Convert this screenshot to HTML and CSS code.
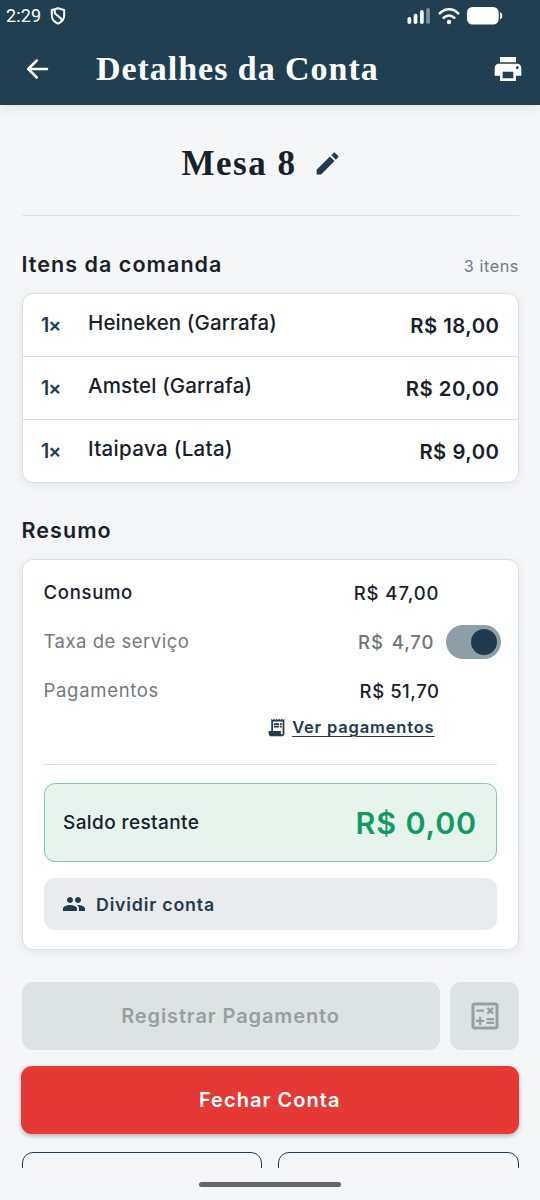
FILE: index.html
```html
<!DOCTYPE html>
<html lang="pt-BR">
<head>
<meta charset="utf-8">
<meta name="viewport" content="width=device-width, initial-scale=1">
<title>Detalhes da Conta</title>
<link rel="stylesheet" href="styles.css">
</head>
<body>
<div class="screen">
  <header class="top">
    <div class="status">
      <span class="clock">2:29</span>
      <svg class="shield" viewBox="0 0 16 18"><path d="M8 1.300 14.200 3v5.600c0 3.700-2.500 6.500-6.200 8.100C4.300 15.100 1.800 12.300 1.800 8.600V3z"/><path d="M4.500 2.300 5 6.600l6.300 5.200.4 2.400"/></svg>
      <div class="status-right">
        <svg class="signal" viewBox="0 0 24 18"><rect x="0.500" y="10" width="3.700" height="7" rx="1.800"/><rect x="6.700" y="6.700" width="3.700" height="10.300" rx="1.800"/><rect x="13" y="3" width="3.700" height="14" rx="1.800"/><rect class="dim" x="19.200" y="1" width="3.700" height="16" rx="1.800"/></svg>
        <svg class="wifi" viewBox="0 0 22 18"><path d="M1.800 6.300C7.200.9 14.800.9 20.200 6.300M5.700 10.700c3.200-2.900 7.400-2.900 10.600 0"/><circle cx="11" cy="15" r="2.200"/></svg>
        <svg class="battery" viewBox="0 0 36 18"><rect x="0" y="0" width="31.700" height="17.500" rx="5.500"/><path d="M33 5.300c1.600.4 2.300 1.500 2.300 3.500s-.7 3.100-2.300 3.500z"/></svg>
      </div>
    </div>
    <div class="bar">
      <svg class="back" viewBox="0 0 24 24"><path d="M11.800 3.500 3.200 12l8.600 8.500M3.500 12H22"/></svg>
      <h1 class="title">Detalhes da Conta</h1>
      <svg class="print" viewBox="0 0 24 24"><path d="M19 8H5c-1.660 0-3 1.340-3 3v6h4v4h12v-4h4v-6c0-1.660-1.340-3-3-3zm-3 11H8v-5h8v5zm3-7c-.55 0-1-.45-1-1s.45-1 1-1 1 .45 1 1-.45 1-1 1zm-1-9H6v4h12V3z"/></svg>
    </div>
  </header>

  <main class="content">
    <div class="table-name">
      <h2 class="name">Mesa 8</h2>
      <svg class="edit" viewBox="0 0 24 24"><path d="M3 17.250V21h3.750L17.810 9.940l-3.750-3.750L3 17.250zM20.710 7.040c.39-.39.39-1.020 0-1.410l-2.340-2.340c-.39-.39-1.020-.39-1.410 0l-1.830 1.830 3.750 3.750 1.830-1.830z"/></svg>
    </div>

    <div class="section-head">
      <h3 class="section-title">Itens da comanda</h3>
      <span class="count">3 itens</span>
    </div>
    <ul class="card items">
      <li class="item"><span class="qty">1×</span><span class="product">Heineken (Garrafa)</span><span class="price">R$ 18,00</span></li>
      <li class="item"><span class="qty">1×</span><span class="product">Amstel (Garrafa)</span><span class="price">R$ 20,00</span></li>
      <li class="item"><span class="qty">1×</span><span class="product wide">Itaipava (Lata)</span><span class="price">R$ 9,00</span></li>
    </ul>

    <h3 class="section-title summary-title">Resumo</h3>
    <section class="card summary">
      <div class="line"><span class="label strong">Consumo</span><span class="value">R$ 47,00</span></div>
      <div class="line with-switch"><span class="label">Taxa de serviço</span><span class="value muted">R$ 4,70</span><span class="switch"><span class="knob"></span></span></div>
      <div class="line"><span class="label paid">Pagamentos</span><span class="value narrow">R$ 51,70</span></div>
      <div class="see">
        <svg class="receipt" viewBox="0 0 24 24"><path fill-rule="evenodd" d="M19.500 3.500 18 2l-1.500 1.500L15 2l-1.500 1.500L12 2l-1.500 1.500L9 2 7.500 3.500 6 2v14H3v3c0 1.660 1.340 3 3 3h12c1.660 0 3-1.340 3-3V2l-1.500 1.500zM19 19c0 .55-.45 1-1 1s-1-.45-1-1v-3H8V5h11v14z"/><path d="M9 7h6v2H9zM16 7h2v2h-2zM9 10h6v2H9zM16 10h2v2h-2z"/></svg>
        <a class="see-link">Ver pagamentos</a>
      </div>
      <div class="balance"><span class="balance-label">Saldo restante</span><span class="balance-value">R$ 0,00</span></div>
      <div class="split">
        <svg class="group" viewBox="0 0 24 24"><path d="M16 11c1.660 0 2.990-1.340 2.990-3S17.660 5 16 5c-1.660 0-3 1.340-3 3s1.340 3 3 3zm-8 0c1.660 0 2.990-1.340 2.990-3S9.660 5 8 5C6.340 5 5 6.340 5 8s1.340 3 3 3zm0 2c-2.330 0-7 1.170-7 3.500V19h14v-2.500c0-2.330-4.670-3.500-7-3.500zm8 0c-.29 0-.62.02-.97.05 1.160.84 1.970 1.970 1.970 3.450V19h6v-2.500c0-2.330-4.670-3.500-7-3.500z"/></svg>
        <span class="split-label">Dividir conta</span>
      </div>
    </section>

    <div class="pay">
      <div class="btn disabled register"><span>Registrar Pagamento</span></div>
      <div class="btn disabled calc"><svg class="calc-icon" viewBox="0 0 24 24"><path d="M19 3H5c-1.100 0-2 .9-2 2v14c0 1.100.9 2 2 2h14c1.100 0 2-.9 2-2V5c0-1.100-.9-2-2-2zm0 16H5V5h14v14z"/><path d="M6.250 7.720h5v1.500h-5zM13 15.750h5v1.500h-5zM13 13.250h5v1.500h-5zM8 18h1.500v-2h2v-1.500h-2v-2H8v2H6V16h2zM14.090 10.950l1.410-1.410 1.410 1.410 1.060-1.060-1.410-1.420 1.410-1.410L16.910 6 15.500 7.410 14.090 6l-1.060 1.060 1.410 1.410-1.410 1.420z"/></svg></div>
    </div>
    <div class="btn close"><span>Fechar Conta</span></div>
    <div class="more"><div class="outlined"></div><div class="outlined"></div></div>
  </main>
  <footer class="nav"><div class="handle"></div></footer>
</div>
</body>
</html>
```

FILE: styles.css
```css
* { box-sizing: border-box; }
body { margin: 0; font-family: Inter, sans-serif; color: #17212a; }
h1, h2, h3, ul { margin: 0; padding: 0; }
svg { display: block; flex: none; }
span, a, h1, h2, h3 { white-space: nowrap; }

.screen { width: 540px; height: 1200px; background: #f4f6f8; display: flex; flex-direction: column; overflow: hidden; }

.top { height: 105px; flex: none; background: #204052; color: #fff; box-shadow: 0 2px 10px rgba(60, 70, 60, 0.12); }
.status { height: 32px; padding: 0 37px 0 6px; display: flex; align-items: center; }
.clock { font: 400 18px/32px Roboto, sans-serif; letter-spacing: 0.100px; }
.shield { width: 16px; height: 18px; margin-left: 9px; fill: none; stroke: #fff; stroke-width: 2; stroke-linejoin: round; }
.status-right { margin-left: auto; display: flex; align-items: center; fill: #fff; }
.signal { width: 24px; height: 18px; margin-right: 7px; }
.dim { fill: #7d909b; }
.wifi { width: 22px; height: 18px; margin-right: 7px; }
.wifi path { fill: none; stroke: #fff; stroke-width: 2.600; stroke-linecap: round; }
.battery { width: 36px; height: 18px; }
.bar { height: 73px; padding: 0 16px 0 25px; display: flex; align-items: center; }
.back { width: 24px; height: 24px; fill: none; stroke: #fff; stroke-width: 2.500; stroke-linecap: round; stroke-linejoin: round; }
.title { margin-left: 47px; font: 700 34px/73px "Liberation Serif", serif; letter-spacing: 0.960px; }
.print { width: 32px; height: 32px; margin-left: auto; fill: #fff; }

.content { flex: 1; min-height: 0; overflow: hidden; padding: 0 21.500px; }
.table-name { height: 111px; padding: 7px 16px 0 0; border-bottom: 1px solid #dce1e5; display: flex; align-items: center; justify-content: center; gap: 17px; }
.name { font: 700 35px/48px "Liberation Serif", serif; letter-spacing: 1.500px; }
.edit { width: 29px; height: 29px; fill: #1f3b4d; }

.section-head { height: 77px; display: flex; justify-content: space-between; padding-top: 33px; }
.section-title { font-size: 21.500px; font-weight: 600; line-height: 30px; letter-spacing: 1.050px; }
.count { font-size: 16.200px; line-height: 35px; color: #73797d; letter-spacing: 0.600px; margin-right: -0.500px; }

.card { background: #fff; border: 1px solid #d8e0e4; border-radius: 11px; box-shadow: 0 2px 9px rgba(32, 64, 82, 0.08); list-style: none; }
.items { height: 190px; }
.item { height: 63px; padding: 0 18px 0 18.500px; display: flex; align-items: center; border-bottom: 1px solid #d8e0e4; }
.item:last-child { height: 62px; border-bottom: 0; }
.qty { width: 47px; font-size: 19.500px; font-weight: 600; color: #1f3b4d; letter-spacing: -1px; }
.product { flex: 1; font-size: 20.500px; font-weight: 500; padding-bottom: 5px; letter-spacing: 0.130px; }
.wide { letter-spacing: 0.330px; }
.price { font-size: 20.300px; font-weight: 600; letter-spacing: 0.500px; }

.summary-title { padding-top: 32px; height: 76px; }
.summary { height: 391px; padding: 7.500px 21px 0; }
.line { height: 49px; display: flex; align-items: center; justify-content: space-between; padding-right: 57px; }
.with-switch { padding-right: 0; margin-right: -4px; }
.label { font-size: 18.500px; color: #73797d; letter-spacing: 0.500px; }
.paid { letter-spacing: 0.700px; }
.strong { font-weight: 500; color: #17212a; letter-spacing: 0.700px; }
.value { font-size: 18.500px; font-weight: 500; padding-top: 2px; letter-spacing: 0.950px; }
.narrow { letter-spacing: 0.550px; }
.muted { color: #6d7478; margin-left: auto; word-spacing: 2px; }
.switch { width: 55px; height: 34px; margin: 1px 0 0 11px; border-radius: 17px; background: #8e9fa7; display: flex; align-items: center; justify-content: flex-end; padding-right: 4px; }
.knob { width: 26px; height: 26px; border-radius: 50%; background: #1f3b4d; }
.see { height: 50.500px; padding: 0 62px 24.500px 0; display: flex; align-items: center; justify-content: flex-end; gap: 5px; border-bottom: 1px solid #dde2e5; }
.receipt { width: 21px; height: 21px; fill: #1f3b4d; }
.see-link { font-size: 16.500px; font-weight: 600; color: #1f3b4d; letter-spacing: 0.830px; text-decoration: underline; text-decoration-thickness: 1px; text-underline-offset: 3px; }
.balance { height: 79px; margin-top: 18px; padding: 0 18.500px; display: flex; align-items: center; justify-content: space-between; background: #e6f4ed; border: 1px solid #7fcaaa; border-radius: 11px; }
.balance-label { font-size: 19px; font-weight: 500; letter-spacing: 0.400px; }
.balance-value { font-size: 30.500px; font-weight: 600; color: #119a62; letter-spacing: 0.800px; padding-bottom: 1px; }
.split { height: 52px; margin-top: 16px; padding-left: 18px; display: flex; align-items: center; gap: 10.500px; background: #e9ebed; border-radius: 11px; }
.group { width: 24px; height: 24px; fill: #1f3b4d; }
.split-label { font-size: 17.800px; font-weight: 600; color: #1f3b4d; letter-spacing: 0.800px; }

.pay { display: flex; gap: 10px; margin-top: 32px; }
.btn { height: 68px; border-radius: 11px; display: flex; align-items: center; justify-content: center; font-size: 20px; font-weight: 600; letter-spacing: 0.880px; }
.disabled { background: #dde2e3; color: #969fa2; }
.register { flex: 1; }
.calc { width: 69px; padding-left: 1px; }
.calc-icon { width: 36px; height: 36px; fill: #969fa2; }
.close { margin: 16px 0 0 -0.500px; background: #e63935; color: #fff; letter-spacing: 1.050px; box-shadow: 0 2px 4px rgba(0, 0, 0, 0.28); }
.more { display: flex; gap: 16px; margin-top: 18px; }
.outlined { flex: 1; height: 68px; border: 1.500px solid #204052; border-radius: 11px; }

.nav { height: 32px; flex: none; display: flex; justify-content: center; padding-top: 14px; }
.handle { width: 142px; height: 5px; border-radius: 3px; background: #666769; }
```
